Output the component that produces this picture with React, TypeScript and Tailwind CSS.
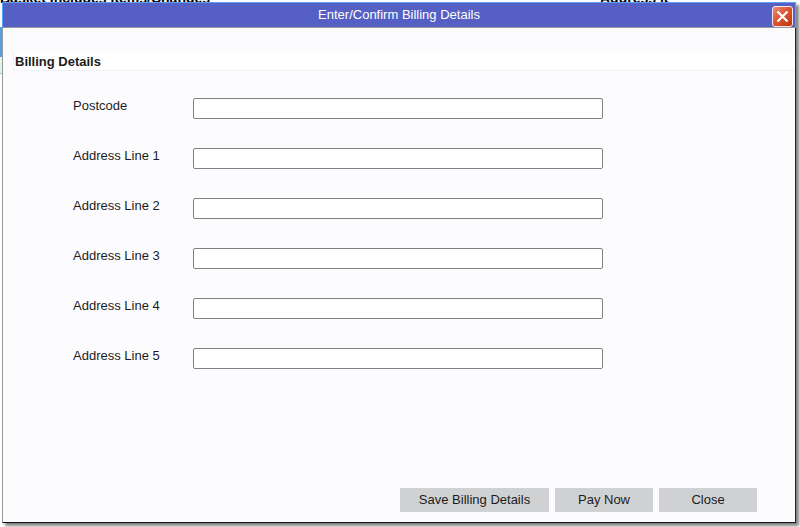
import React, { useState } from "react";

const fields = [
  "Postcode",
  "Address Line 1",
  "Address Line 2",
  "Address Line 3",
  "Address Line 4",
  "Address Line 5",
];

const buttonClass = "h-6 bg-[#d0d1d3] text-center hover:bg-[#c4c5c7]";

const CloseIcon: React.FC = () => (
  <svg viewBox="0 0 21 21" className="block h-[21px] w-[21px]" aria-hidden="true">
    <defs>
      <linearGradient id="closeFill" x1="0" y1="0" x2="1" y2="1">
        <stop offset="0" stopColor="#ec9580" />
        <stop offset="0.45" stopColor="#dc5533" />
        <stop offset="1" stopColor="#c43306" />
      </linearGradient>
    </defs>
    <rect x="0.5" y="0.5" width="20" height="20" rx="2.5" fill="url(#closeFill)" stroke="#f6e6ee" />
    <path d="M5.5 5.5L15.5 15.5M15.5 5.5L5.5 15.5" stroke="#fff" strokeWidth="2.2" />
  </svg>
);

// the page behind the dialog, only its edges show
const PageBehind: React.FC = () => (
  <div aria-hidden="true" className="absolute inset-0 overflow-hidden bg-white">
    <div className="-mt-[10px] flex h-[37px] text-[14px] font-bold leading-4 text-black">
      <span className="w-3/4">Basket Includes Items/Changes</span>
      <span className="flex-1">Address it</span>
    </div>
    <div className="h-[30px] w-2 bg-[#4ea3e6]" />
    <div className="h-[17px] w-2 border-b border-[#8fd8bf] bg-[#dff5ea]" />
  </div>
);

const BillingDialog: React.FC = () => {
  const [values, setValues] = useState<string[]>(fields.map(() => ""));

  const handleChange = (index: number, value: string) => {
    setValues(values.map((v, i) => (i === index ? value : v)));
  };

  return (
    <div
      role="dialog"
      aria-labelledby="dialog-title"
      className="relative flex flex-1 flex-col border-r border-b border-l border-r-[#222] border-b-[#111] border-l-[#999] bg-[#fcfcfe] shadow-[3px_3px_3px_rgba(0,0,0,0.5)]"
    >
      <header className="relative -mx-px flex h-[26px] items-center justify-center border-t border-r border-b border-l border-t-[#5ba0f5] border-r-[#5ba0f5] border-b-[#999] border-l-[#5ba0f5] bg-[#555fc4]">
        <h1 id="dialog-title" className="leading-4 text-white">
          Enter/Confirm Billing Details
        </h1>
        <button type="button" aria-label="Close window" className="absolute top-[3px] right-[2px]">
          <CloseIcon />
        </button>
      </header>

      <form className="flex flex-1 flex-col" onSubmit={(e) => e.preventDefault()}>
        <h2 className="mt-[25px] ml-[10px] border-b border-l border-[#f0f0f2] bg-white pl-px leading-[17px] font-bold">
          Billing Details
        </h2>
        <div className="mt-[27px] flex flex-col gap-[29px] pr-48 pl-[70px]">
          {fields.map((field, i) => (
            <div key={field} className="flex h-[21px] items-start">
              <label htmlFor={`field-${i}`} className="w-[120px] shrink-0 leading-4">
                {field}
              </label>
              <input
                id={`field-${i}`}
                type="text"
                className="h-[21px] min-w-0 flex-1 rounded-[2px] border border-[#808080] bg-white px-1 outline-none"
                value={values[i]}
                onChange={(e) => handleChange(i, e.target.value)}
              />
            </div>
          ))}
        </div>
        <div className="mt-auto mb-[10px] flex justify-end gap-[6px] pr-[38px]">
          <button type="submit" className={`${buttonClass} w-[149px]`}>
            Save Billing Details
          </button>
          <button type="button" className={`${buttonClass} w-[98px]`}>
            Pay Now
          </button>
          <button type="button" className={`${buttonClass} w-[98px]`}>
            Close
          </button>
        </div>
      </form>
    </div>
  );
};

const App: React.FC = () => {
  return (
    <div className="relative flex min-h-screen flex-col overflow-hidden pt-[2px] pr-1 pb-1 pl-[2px] font-['Liberation_Sans',Arial,sans-serif] text-[13px] text-[#1c1c1c]">
      <PageBehind />
      <BillingDialog />
    </div>
  );
};

export default App;
